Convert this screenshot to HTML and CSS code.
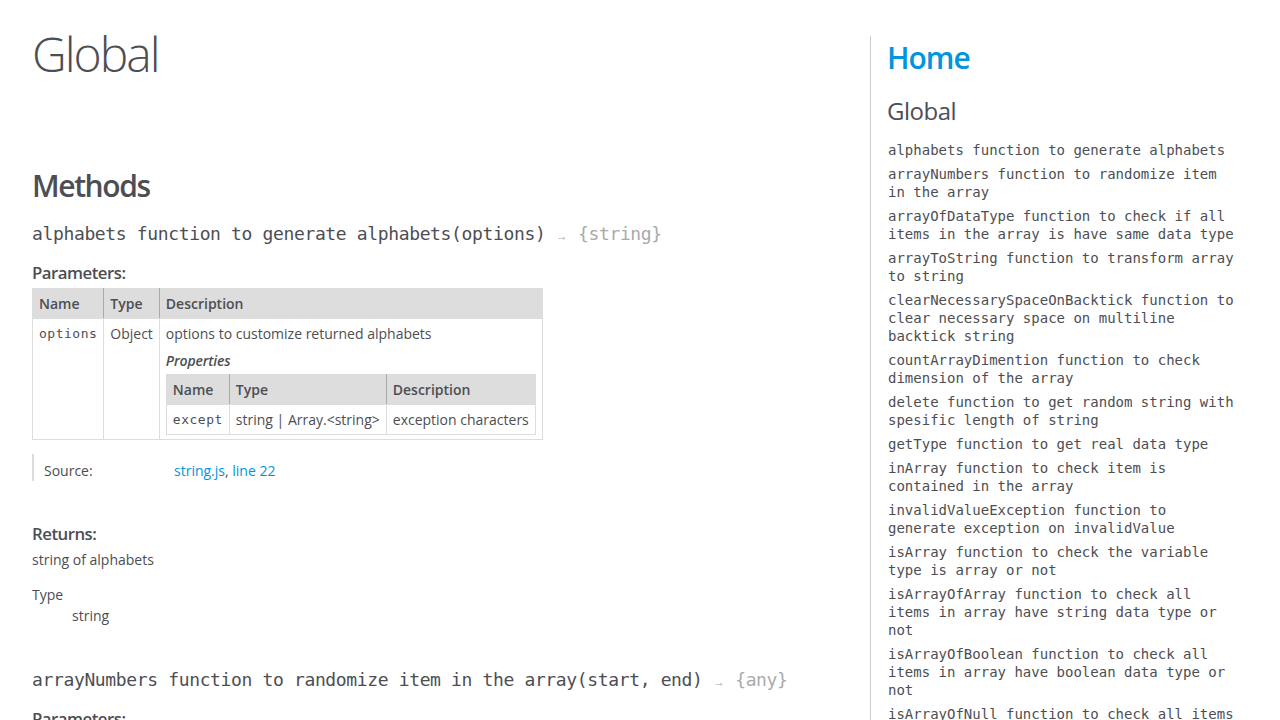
FILE: index.html
```html
<!DOCTYPE html>
<html lang="en">
<head>
<meta charset="utf-8">
<title>JSDoc: Global</title>
<link rel="stylesheet" href="styles.css">
</head>
<body>
<div class="page">
  <div class="main">
    <h1 class="page-title">Global</h1>
    <section class="global">
      <h3 class="subsection-title">Methods</h3>

      <h4 class="name">alphabets function to generate alphabets<span class="signature">(options)</span><span class="type-signature"> <span class="arrow">&rarr;</span> {string}</span></h4>
      <h5>Parameters:</h5>
      <table class="params">
        <thead>
          <tr><th>Name</th><th>Type</th><th class="last">Description</th></tr>
        </thead>
        <tbody>
          <tr>
            <td class="name"><code>options</code></td>
            <td class="type">Object</td>
            <td class="description last">
              <div class="desc-text">options to customize returned alphabets</div>
              <h6>Properties</h6>
              <table class="params">
                <thead>
                  <tr><th>Name</th><th>Type</th><th class="last">Description</th></tr>
                </thead>
                <tbody>
                  <tr>
                    <td class="name"><code>except</code></td>
                    <td class="type">string | Array.&lt;string&gt;</td>
                    <td class="description last">exception characters</td>
                  </tr>
                </tbody>
              </table>
            </td>
          </tr>
        </tbody>
      </table>
      <dl class="details">
        <dt class="tag-source">Source:</dt>
        <dd class="tag-source"><a href="#">string.js</a>, <a href="#">line 22</a></dd>
      </dl>
      <h5>Returns:</h5>
      <div class="param-desc">string of alphabets</div>
      <dl class="return-type">
        <dt>Type</dt>
        <dd><span class="param-type">string</span></dd>
      </dl>

      <h4 class="name">arrayNumbers function to randomize item in the array<span class="signature">(start, end)</span><span class="type-signature"> <span class="arrow">&rarr;</span> {any}</span></h4>
      <h5>Parameters:</h5>
      <table class="params">
        <thead>
          <tr><th>Name</th><th>Type</th><th class="last">Description</th></tr>
        </thead>
        <tbody>
          <tr>
            <td class="name"><code>start</code></td>
            <td class="type">number</td>
            <td class="description last">start of the range</td>
          </tr>
        </tbody>
      </table>
    </section>
  </div>
  <nav class="nav">
    <h2 class="nav-home"><a href="#">Home</a></h2>
    <h3 class="nav-title">Global</h3>
    <ul class="nav-list">
      <li><a href="#">alphabets function to generate alphabets</a></li>
      <li><a href="#">arrayNumbers function to randomize item in the array</a></li>
      <li><a href="#">arrayOfDataType function to check if all items in the array is have same data type</a></li>
      <li><a href="#">arrayToString function to transform array to string</a></li>
      <li><a href="#">clearNecessarySpaceOnBacktick function to clear necessary space on multiline backtick string</a></li>
      <li><a href="#">countArrayDimention function to check dimension of the array</a></li>
      <li><a href="#">delete function to get random string with spesific length of string</a></li>
      <li><a href="#">getType function to get real data type</a></li>
      <li><a href="#">inArray function to check item is contained in the array</a></li>
      <li><a href="#">invalidValueException function to generate exception on invalidValue</a></li>
      <li><a href="#">isArray function to check the variable type is array or not</a></li>
      <li><a href="#">isArrayOfArray function to check all items in array have string data type or not</a></li>
      <li><a href="#">isArrayOfBoolean function to check all items in array have boolean data type or not</a></li>
      <li><a href="#">isArrayOfNull function to check all items in array have null data type or not</a></li>
      <li><a href="#">isArrayOfNumber function to check all items in array have number data type or not</a></li>
    </ul>
  </nav>
</div>
</body>
</html>
```
FILE: styles.css
```css
html {
  background-color: #fff;
  font-size: 14px;
}

body {
  margin: 0;
  font-family: "Open Sans", "Liberation Sans", sans-serif;
  font-size: 14px;
  line-height: 1.5;
  color: #4d4e53;
  background-color: #fff;
}

a, a:visited, a:active {
  color: #0095dd;
  text-decoration: none;
}

code, .name, .signature {
  font-family: "DejaVu Sans Mono", "Liberation Mono", monospace;
}

.page {
  display: flex;
  align-items: flex-start;
  padding: 0 8px;
}

.main {
  width: 838px;
  flex: 0 0 auto;
  padding-left: 24px;
  display: flow-root;
}

h1, h2, h3, h4, h5, h6 {
  margin: 0;
}

.page-title {
  font-size: 48px;
  font-weight: 300;
  line-height: 48px;
  letter-spacing: -2px;
  margin: 30px 0 0 0;
}

.subsection-title {
  font-size: 30px;
  font-weight: 600;
  letter-spacing: -1.4px;
  line-height: 45px;
  margin: 85px 0 12px 0;
}

h4.name {
  font-size: 18px;
  font-weight: 400;
  line-height: 27px;
  letter-spacing: -0.36px;
  color: #4d4e53;
  margin: 0 0 11px 0;
}

.type-signature {
  color: #aaa;
}

.arrow {
  font-family: "Open Sans", sans-serif;
  font-size: 12px;
}

h5 {
  font-size: 16.8px;
  font-weight: 600;
  line-height: 25.2px;
  letter-spacing: -0.5px;
  margin: 8px 0 3px 0;
}

h6 {
  font-size: 14px;
  font-weight: 600;
  font-style: italic;
  line-height: 21px;
  letter-spacing: -0.14px;
  margin: 6px 0 3px 0;
}

table {
  border-spacing: 0;
  border-collapse: collapse;
}

td, th {
  border: 1px solid #ddd;
  text-align: left;
  vertical-align: top;
  padding: 4px 6px;
  line-height: 21px;
}

thead tr {
  background-color: #ddd;
}

th {
  font-weight: 600;
  border-right: 1px solid #aaa;
}

th.last {
  border-right: 1px solid #ddd;
}

.params code {
  font-size: 13px;
  color: #4d4e53;
  letter-spacing: 0.5px;
}

.desc-text {
  margin: 0;
}

.details {
  display: flex;
  margin: 14px 0 40px 0;
  border-left: 2px solid #ddd;
}

.details dt {
  width: 120px;
  padding: 6px 0 0 10px;
  margin: 0;
}

.details dd {
  margin: 0;
  padding: 6px 0 0 10px;
}

.param-desc {
  margin: 0;
}

.return-type {
  margin: 14px 0 40px 0;
}

.return-type dt {
  margin: 0;
}

.return-type dd {
  margin: 0 0 0 40px;
}

.nav {
  flex: 0 0 auto;
  width: 350px;
  margin-top: 36px;
  border-left: 1px solid #ccc;
  padding-left: 16px;
  min-height: 700px;
}

.nav-home {
  font-size: 30px;
  font-weight: 600;
  letter-spacing: -1px;
  line-height: 45px;
  margin-top: -1px;
}

.nav-title {
  font-size: 24px;
  font-weight: 400;
  letter-spacing: -0.5px;
  line-height: 36px;
  margin: 13px 0 12px 0;
}

.nav-list {
  list-style: none;
  margin: 0;
  padding: 0;
  font-size: 14px;
  line-height: 17px;
}

.nav-list li {
  margin-top: 6px;
}

.nav-list a, .nav-list a:visited {
  font-family: "DejaVu Sans Mono", "Liberation Mono", monospace;
  font-size: 14px;
  line-height: 18px;
  color: #4d4e53;
  display: block;
  padding-left: 1px;
}
```
